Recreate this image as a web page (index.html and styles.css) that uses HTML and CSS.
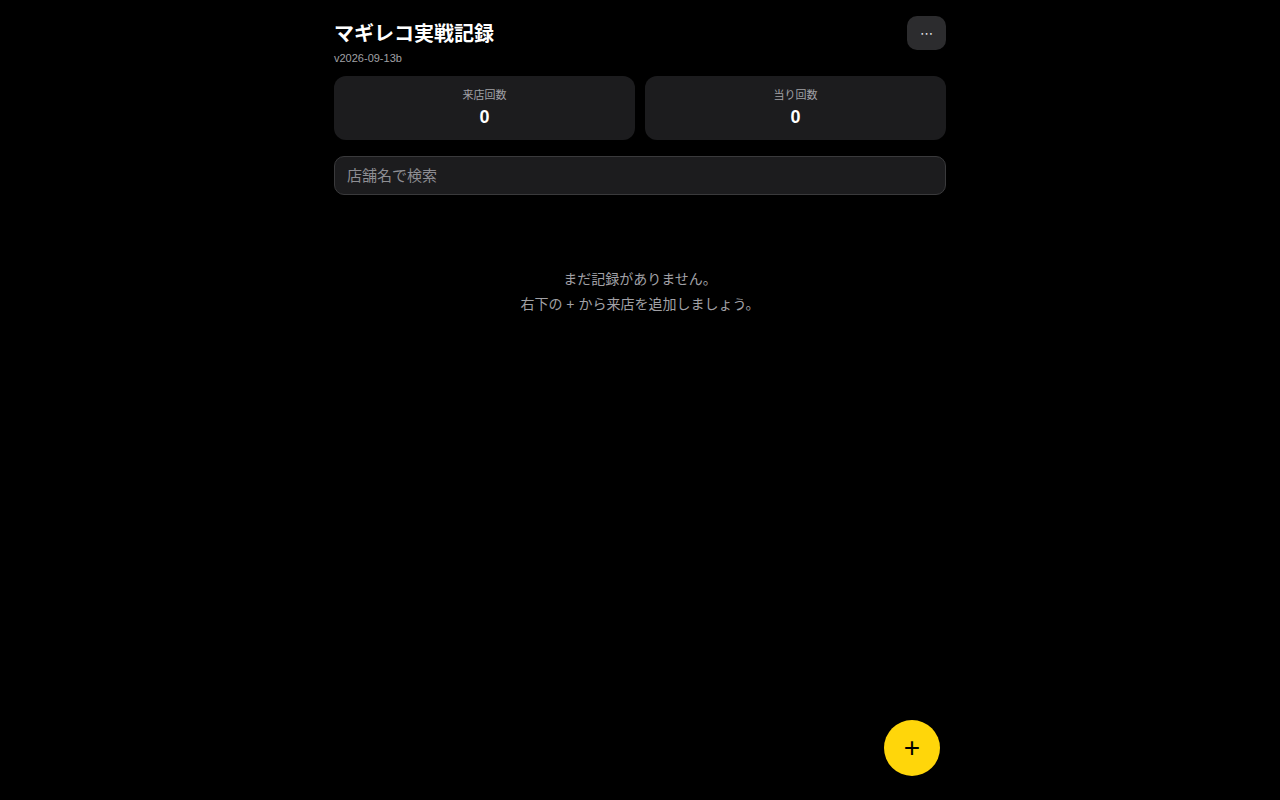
FILE: index.html
```html
<!DOCTYPE html>
<html lang="ja">
<head>
<meta charset="utf-8">
<title>マギレコ実戦記録</title>
<link rel="stylesheet" href="styles.css">
</head>
<body>
<div class="app">
  <header class="header">
    <div class="title-block">
      <h1 class="title">マギレコ実戦記録</h1>
      <div class="version">v2026-09-13b</div>
    </div>
    <button class="menu-btn" type="button">⋯</button>
  </header>
  <section class="stats">
    <div class="stat-card">
      <div class="stat-label">来店回数</div>
      <div class="stat-value">0</div>
    </div>
    <div class="stat-card">
      <div class="stat-label">当り回数</div>
      <div class="stat-value">0</div>
    </div>
  </section>
  <input class="search" type="text" placeholder="店舗名で検索">
  <div class="empty">
    <p>まだ記録がありません。</p>
    <p>右下の + から来店を追加しましょう。</p>
  </div>
</div>
<button class="fab" type="button">+</button>
</body>
</html>
```
FILE: styles.css
```css
html, body {
  margin: 0;
  padding: 0;
  background: #000;
  color: #fff;
  font-family: "Liberation Sans", "Noto Sans CJK JP", sans-serif;
}

.app {
  max-width: 612px;
  margin: 0 auto;
  padding: 16px 0;
}

.header {
  display: flex;
  justify-content: space-between;
  align-items: flex-start;
}

.title {
  margin: 0;
  padding-top: 1px;
  font-size: 20px;
  font-weight: 600;
  line-height: 34px;
}

.version {
  font-size: 11px;
  line-height: 14px;
  color: #a1a1a6;
}

.menu-btn {
  width: 39px;
  height: 34px;
  border: none;
  border-radius: 10px;
  background: #2c2c2e;
  color: #e5e5ea;
  font-size: 13px;
  line-height: 1;
  padding: 0;
  font-family: "DejaVu Sans", sans-serif;
}

.stats {
  display: grid;
  grid-template-columns: 1fr 1fr;
  gap: 10px;
  margin-top: 11px;
}

.stat-card {
  background: #1c1c1e;
  border-radius: 12px;
  padding: 12px 0 11px;
  text-align: center;
}

.stat-label {
  font-size: 11px;
  line-height: 14px;
  color: #a1a1a6;
}

.stat-value {
  font-size: 18px;
  font-weight: 700;
  line-height: 24px;
  margin-top: 3px;
}

.search {
  display: block;
  box-sizing: border-box;
  width: 100%;
  height: 39px;
  margin-top: 16px;
  padding: 0 12px;
  background: #1c1c1e;
  border: 1px solid #3a3a3c;
  border-radius: 10px;
  color: #fff;
  font-size: 15px;
  font-family: "Liberation Sans", "Noto Sans CJK JP", sans-serif;
  outline: none;
}

.search::placeholder {
  color: #8e8e93;
}

.empty {
  padding-top: 72px;
  text-align: center;
  color: #a1a1a6;
  font-size: 14px;
  line-height: 25px;
}

.empty p {
  margin: 0;
}

.fab {
  position: fixed;
  right: calc(50% - 300px);
  bottom: 24px;
  width: 56px;
  height: 56px;
  border-radius: 50%;
  border: none;
  background: #ffd60a;
  color: #000;
  font-size: 28px;
  line-height: 1;
  padding: 0;
  font-family: "Liberation Sans", sans-serif;
}
```
